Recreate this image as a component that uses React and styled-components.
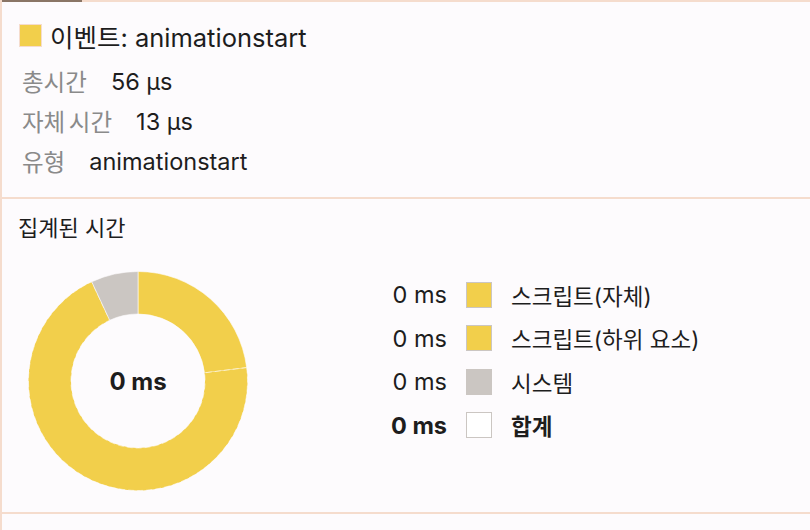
import React from "react";
import styled, { createGlobalStyle } from "styled-components";

const GlobalStyle = createGlobalStyle`
  html, body {
    margin: 0;
    padding: 0;
    background: #fdfbfd;
  }
  body {
    font-family: "Inter", "Noto Sans CJK KR", sans-serif;
    color: #1d1d1d;
  }
`;

const Panel = styled.div`
  width: 810px;
  height: 530px;
  overflow: hidden;
  border-left: 2px solid #f5dccd;
  box-sizing: border-box;
  background: #fdfbfd;
`;

const TopEdge = styled.div`
  display: flex;
  height: 2px;
  background: #f5dccd;
`;

const ActiveTab = styled.div`
  width: 80px;
  height: 2px;
  background: #8a7566;
`;

const Section = styled.section`
  padding: ${({ $pad }) => $pad};
  border-bottom: 2px solid #f5dccd;
`;

const TitleRow = styled.div`
  display: flex;
  align-items: center;
  gap: 8px;
  height: 30px;
  margin-left: 17px;
  margin-bottom: 11px;
  font-size: 25.5px;
`;

const Swatch = styled.span`
  display: inline-block;
  flex: none;
  box-sizing: border-box;
  width: ${({ $size }) => $size}px;
  height: ${({ $size }) => $size}px;
  background: ${({ $color }) => $color};
  border: ${({ $border }) => $border};
`;

const InfoRow = styled.div`
  display: flex;
  align-items: center;
  height: 40px;
  padding-left: 20px;
  font-size: 23.5px;
`;

const Label = styled.span`
  color: #8a8a8a;
  margin-right: 24px;
  word-spacing: -3px;
`;

const SectionTitle = styled.div`
  font-size: 22px;
  line-height: 26px;
  margin-left: 16px;
`;

const ChartRow = styled.div`
  display: flex;
  align-items: flex-start;
  margin-top: 30px;
  padding-left: 26px;
`;

const DonutBox = styled.div`
  position: relative;
  width: 220px;
  height: 220px;
`;

const DonutLabel = styled.div`
  position: absolute;
  inset: 0;
  display: flex;
  align-items: center;
  justify-content: center;
  font-size: 24px;
  font-weight: 700;
`;

const Legend = styled.div`
  display: grid;
  grid-template-columns: 67px 26px auto;
  column-gap: 19px;
  grid-auto-rows: 43.5px;
  align-items: center;
  margin-left: 132px;
  margin-top: 2px;
  font-size: 23.5px;
`;

const LegendValue = styled.span`
  text-align: right;
  font-weight: ${({ $bold }) => ($bold ? 700 : 400)};
`;

const LegendName = styled.span`
  font-size: 22.5px;
  font-weight: ${({ $bold }) => ($bold ? 700 : 400)};
`;

const YELLOW = "#f2cf4b";
const GRAY = "#cbc6c2";

const slices = [
  { from: 0, to: 83, color: YELLOW },
  { from: 83, to: 335, color: YELLOW },
  { from: 335, to: 360, color: GRAY },
];

function arc(cx, cy, r0, r1, a0, a1) {
  const p = (r, a) => {
    const t = ((a - 90) * Math.PI) / 180;
    return [cx + r * Math.cos(t), cy + r * Math.sin(t)];
  };
  const large = a1 - a0 > 180 ? 1 : 0;
  const [x0, y0] = p(r1, a0);
  const [x1, y1] = p(r1, a1);
  const [x2, y2] = p(r0, a1);
  const [x3, y3] = p(r0, a0);
  return `M${x0} ${y0} A${r1} ${r1} 0 ${large} 1 ${x1} ${y1} L${x2} ${y2} A${r0} ${r0} 0 ${large} 0 ${x3} ${y3} Z`;
}

const Donut = () => (
  <DonutBox>
    <svg width="220" height="220" viewBox="0 0 220 220">
      {slices.map((s, i) => (
        <path
          key={i}
          d={arc(110, 110, 67, 109.5, s.from, s.to)}
          fill={s.color}
          stroke="#fdfbfd"
          strokeWidth="0.6"
          strokeDasharray={i === 1 ? "6 3" : undefined}
        />
      ))}
    </svg>
    <DonutLabel>0 ms</DonutLabel>
  </DonutBox>
);

const legend = [
  { value: "0 ms", name: "스크립트(자체)", color: YELLOW, border: `1.5px solid ${GRAY}` },
  { value: "0 ms", name: "스크립트(하위 요소)", color: YELLOW, border: `1.5px solid ${GRAY}` },
  { value: "0 ms", name: "시스템", color: GRAY, border: "none" },
  { value: "0 ms", name: "합계", color: "#ffffff", border: `1.5px solid ${GRAY}`, bold: true },
];

export default function App() {
  return (
    <>
      <GlobalStyle />
      <Panel>
        <TopEdge>
          <ActiveTab />
        </TopEdge>
        <Section $pad="18px 0 16px">
          <TitleRow>
            <Swatch $size={23} $color={YELLOW} $border="1.5px solid #f5dccd" />
            <span>이벤트: animationstart</span>
          </TitleRow>
          <InfoRow>
            <Label>총시간</Label>
            <span>56 µs</span>
          </InfoRow>
          <InfoRow>
            <Label>자체 시간</Label>
            <span>13 µs</span>
          </InfoRow>
          <InfoRow>
            <Label>유형</Label>
            <span>animationstart</span>
          </InfoRow>
        </Section>
        <Section $pad="16px 0 21px">
          <SectionTitle>집계된 시간</SectionTitle>
          <ChartRow>
            <Donut />
            <Legend>
              {legend.map((l) => (
                <React.Fragment key={l.name}>
                  <LegendValue $bold={l.bold}>{l.value}</LegendValue>
                  <Swatch $size={26} $color={l.color} $border={l.border} />
                  <LegendName $bold={l.bold}>{l.name}</LegendName>
                </React.Fragment>
              ))}
            </Legend>
          </ChartRow>
        </Section>
      </Panel>
    </>
  );
}
